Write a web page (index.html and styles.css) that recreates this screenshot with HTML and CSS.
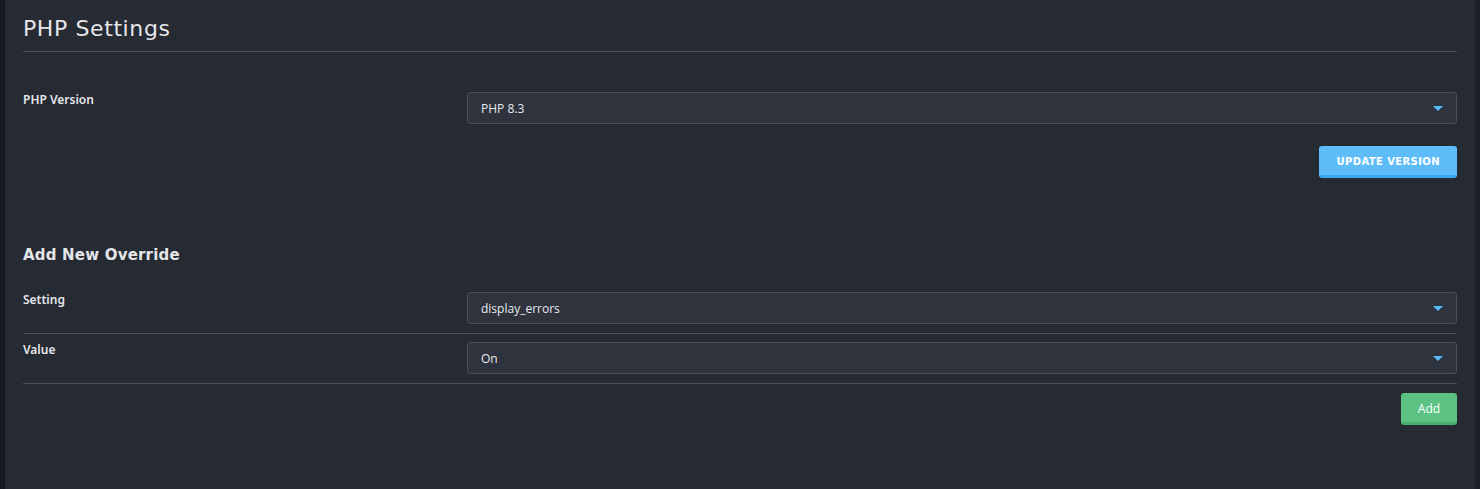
FILE: index.html
```html
<!DOCTYPE html>
<html>
<head>
<meta charset="utf-8">
<link rel="stylesheet" href="styles.css">
</head>
<body>
<div class="shell">
  <div class="edge-left"></div>
  <main class="panel">
    <h1 class="title">PHP Settings</h1>

    <section class="version">
      <div class="row">
        <label class="label">PHP Version</label>
        <div class="select"><span>PHP 8.3</span><i class="caret"></i></div>
      </div>
      <div class="actions">
        <button class="btn btn-blue">UPDATE VERSION</button>
      </div>
    </section>

    <section class="override">
      <h2 class="subtitle">Add New Override</h2>
      <div class="row row-sep">
        <label class="label">Setting</label>
        <div class="select"><span>display_errors</span><i class="caret"></i></div>
      </div>
      <div class="row row-sep">
        <label class="label">Value</label>
        <div class="select"><span>On</span><i class="caret"></i></div>
      </div>
      <div class="actions actions-add">
        <button class="btn btn-green">Add</button>
      </div>
    </section>
  </main>
  <div class="edge-right"></div>
</div>
</body>
</html>
```

FILE: styles.css
```css
html, body {
  margin: 0;
  padding: 0;
  height: 100%;
  background: #262a33;
}
.shell {
  display: flex;
  min-height: 489px;
}
.edge-left {
  width: 5px;
  background: #151922;
  flex: none;
}
.edge-right {
  width: 5px;
  background: #1a1e26;
  flex: none;
}
.panel {
  flex: 1;
  background: #262a33;
  padding: 15px 18px 0 18px;
  color: #e4e6ea;
  font-family: "DejaVu Sans", sans-serif;
}
.title {
  margin: 0;
  font-size: 22px;
  font-weight: normal;
  line-height: 27px;
  padding-bottom: 9px;
  border-bottom: 1px solid #4a4e58;
  letter-spacing: 0.6px;
}
.version {
  margin-top: 40px;
}
.row {
  display: grid;
  grid-template-columns: 444px 1fr;
  align-items: start;
}
.label {
  font-family: "Noto Sans", sans-serif;
  font-size: 12px;
  font-weight: 600;
  line-height: 16px;
  color: #e4e6ea;
}
.select {
  height: 30px;
  border: 1px solid #4b4f5a;
  border-radius: 3px;
  background: #2f333d;
  display: flex;
  align-items: center;
  justify-content: space-between;
  padding: 0 13px 0 13px;
  font-family: "Open Sans", sans-serif;
  font-size: 12px;
  color: #e8eaee;
}
.caret {
  width: 0;
  height: 0;
  border-left: 5px solid transparent;
  border-right: 5px solid transparent;
  border-top: 5px solid #5bb9f7;
  margin-top: 1px;
}
.actions {
  display: flex;
  justify-content: flex-end;
  margin-top: 22px;
}
.btn {
  border: none;
  border-radius: 3px;
  height: 32px;
  color: #ffffff;
  cursor: pointer;
  box-sizing: border-box;
  white-space: nowrap;
}
.btn-blue {
  background: #5ebdf9;
  border-bottom: 3px solid #39a8f2;
  padding: 1px 17px 0 17px;
  font-family: "DejaVu Sans", sans-serif;
  font-weight: bold;
  font-size: 10px;
  letter-spacing: 0.4px;
}
.btn-green {
  background: #5bc283;
  border-bottom: 3px solid #48ad6f;
  width: 56px;
  padding: 1px 0 0 0;
  font-family: "Open Sans", sans-serif;
  font-size: 12px;
}
.override {
  margin-top: 67px;
}
.subtitle {
  margin: 0 0 27px 0;
  font-size: 15px;
  font-weight: bold;
  line-height: 20px;
  letter-spacing: 0.2px;
}
.row-sep {
  padding-bottom: 9px;
  border-bottom: 1px solid #4a4e58;
}
.row-sep + .row-sep {
  margin-top: 8px;
}
.actions-add {
  margin-top: 9px;
}
```
